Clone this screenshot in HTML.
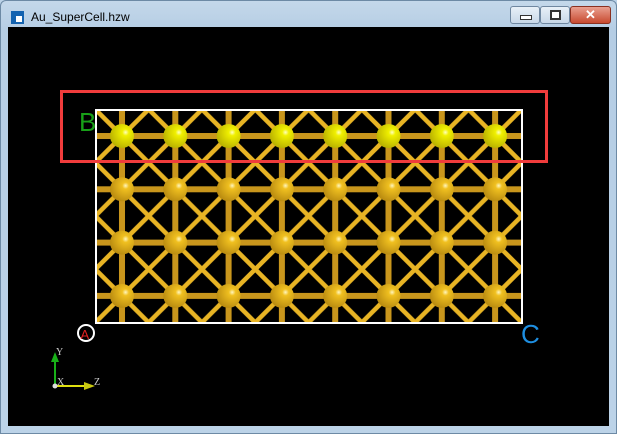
<!DOCTYPE html><html><head><style>
body{margin:0;width:617px;height:434px;overflow:hidden;background:#bcd3e8;font-family:"Liberation Sans",sans-serif}
.win{position:absolute;left:0;top:0;width:615px;height:432px;border:1px solid #6d8aa5;border-radius:6px 6px 0 0;background:linear-gradient(#c4d8ea,#b5cde4 30px,#bcd3e8)}
.title{position:absolute;left:30px;top:9px;font-size:12px;color:#000}
.ico{position:absolute;left:10px;top:10px;width:13px;height:13px;background:#1463b0}
.ico:after{content:"";position:absolute;left:5px;top:5px;width:6px;height:6px;background:#fff}
.btn{position:absolute;top:5px;height:16px;border:1px solid #6f87a0;border-radius:3px;background:linear-gradient(#e8f0f8,#c8d8e8)}
.view{position:absolute;left:8px;top:27px;width:601px;height:399px;background:#000}
</style></head><body>
<div class="win">
<div class="ico"></div><div class="title">Au_SuperCell.hzw</div>
<div class="btn" style="left:509px;width:28px"><div style="position:absolute;left:9px;top:8px;width:10px;height:3px;background:#fff;border:1px solid #333"></div></div>
<div class="btn" style="left:539px;width:28px"><div style="position:absolute;left:9px;top:3px;width:7px;height:6px;border:2px solid #333;background:#fff"></div></div>
<div class="btn" style="left:569px;width:39px;background:linear-gradient(#e9a090,#c84a30);border-color:#8a3020;color:#fff;font-weight:bold;text-align:center;font-size:13px;line-height:16px">✕</div>
</div>
<div class="view"></div>
<svg width="617" height="434" style="position:absolute;left:0;top:0">
<defs>
<pattern id="p" patternUnits="userSpaceOnUse" x="15.4" y="29.4" width="53.3" height="53.3">
<g stroke="#e8b424" stroke-width="4.5">
<line x1="0" y1="0" x2="53.3" y2="53.3"/><line x1="53.3" y1="0" x2="0" y2="53.3"/>
</g>
<g stroke="#c9961c" stroke-width="6">
<line x1="0" y1="0" x2="0" y2="53.3"/><line x1="53.3" y1="0" x2="53.3" y2="53.3"/>
<line x1="0" y1="0" x2="53.3" y2="0"/><line x1="0" y1="53.3" x2="53.3" y2="53.3"/>
</g>
</pattern>
<radialGradient id="g" cx="0.65" cy="0.35" r="0.7"><stop offset="0" stop-color="#fff6c0"/><stop offset="0.2" stop-color="#f0c020"/><stop offset="1" stop-color="#b88a10"/></radialGradient>
<radialGradient id="y" cx="0.65" cy="0.35" r="0.7"><stop offset="0" stop-color="#ffffc0"/><stop offset="0.2" stop-color="#f0f000"/><stop offset="1" stop-color="#b8b000"/></radialGradient>
</defs>
<rect x="96" y="110" width="426" height="213" fill="url(#p)"/>
<g fill="url(#y)">
<circle cx="122" cy="136" r="12"/><circle cx="175.3" cy="136" r="12"/><circle cx="228.6" cy="136" r="12"/><circle cx="281.9" cy="136" r="12"/><circle cx="335.2" cy="136" r="12"/><circle cx="388.5" cy="136" r="12"/><circle cx="441.8" cy="136" r="12"/><circle cx="495.1" cy="136" r="12"/>
</g>
<g fill="url(#g)">
<circle cx="122" cy="189.3" r="12"/><circle cx="175.3" cy="189.3" r="12"/><circle cx="228.6" cy="189.3" r="12"/><circle cx="281.9" cy="189.3" r="12"/><circle cx="335.2" cy="189.3" r="12"/><circle cx="388.5" cy="189.3" r="12"/><circle cx="441.8" cy="189.3" r="12"/><circle cx="495.1" cy="189.3" r="12"/>
<circle cx="122" cy="242.6" r="12"/><circle cx="175.3" cy="242.6" r="12"/><circle cx="228.6" cy="242.6" r="12"/><circle cx="281.9" cy="242.6" r="12"/><circle cx="335.2" cy="242.6" r="12"/><circle cx="388.5" cy="242.6" r="12"/><circle cx="441.8" cy="242.6" r="12"/><circle cx="495.1" cy="242.6" r="12"/>
<circle cx="122" cy="295.9" r="12"/><circle cx="175.3" cy="295.9" r="12"/><circle cx="228.6" cy="295.9" r="12"/><circle cx="281.9" cy="295.9" r="12"/><circle cx="335.2" cy="295.9" r="12"/><circle cx="388.5" cy="295.9" r="12"/><circle cx="441.8" cy="295.9" r="12"/><circle cx="495.1" cy="295.9" r="12"/>
</g>
<rect x="96" y="110" width="426" height="213" fill="none" stroke="#fff" stroke-width="2"/>
<rect x="61.5" y="91.5" width="485" height="70" fill="none" stroke="#f03c3c" stroke-width="3"/>
<text x="79" y="131" font-size="26" fill="#18a018" font-family="Liberation Sans">B</text>
<text x="521" y="343" font-size="26" fill="#1e8ee0" font-family="Liberation Sans">C</text>
<circle cx="86" cy="333" r="8" fill="#000" stroke="#fff" stroke-width="2"/>
<text x="80.5" y="339" font-size="13" fill="#e02020" font-family="Liberation Sans">A</text>
<line x1="55" y1="386" x2="55" y2="360" stroke="#18b018" stroke-width="2"/>
<polygon points="51,362 59,362 55,352" fill="#18b018"/>
<line x1="55" y1="386" x2="85" y2="386" stroke="#e0e010" stroke-width="2"/>
<polygon points="84,382 84,390 95,386" fill="#c8c810"/>
<circle cx="55" cy="386" r="2.5" fill="#ddd"/>
<g font-size="10" fill="#ccc" font-family="Liberation Serif"><text x="56" y="355">Y</text><text x="57" y="385">X</text><text x="94" y="385">Z</text></g>
</svg>
</body></html>
